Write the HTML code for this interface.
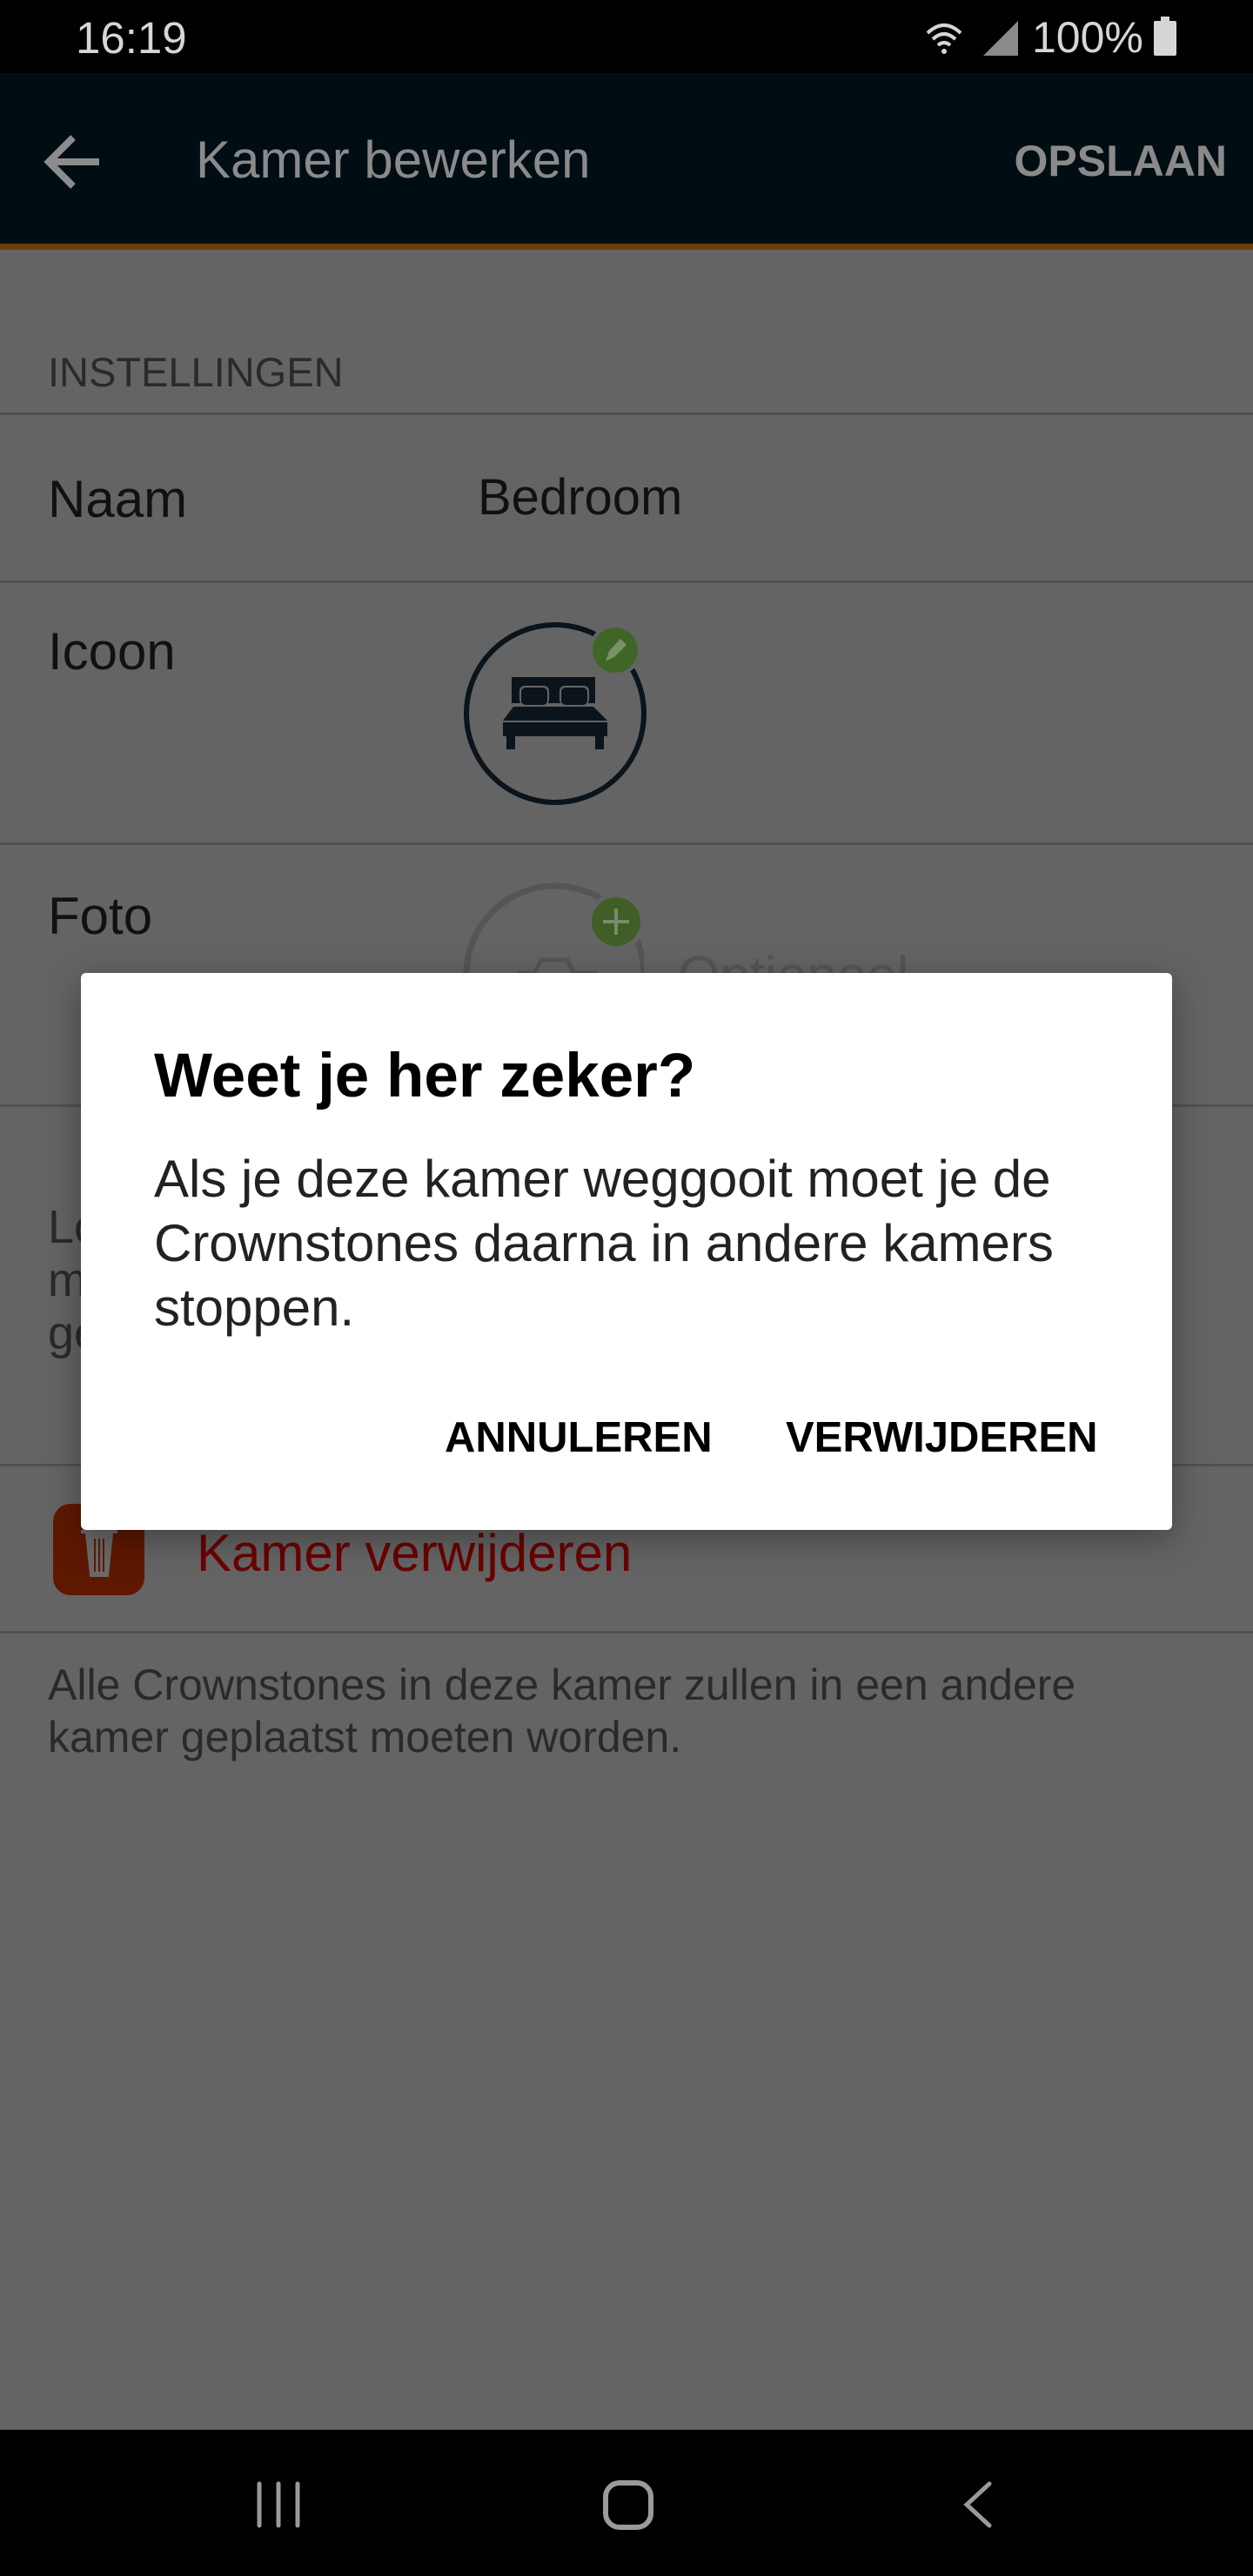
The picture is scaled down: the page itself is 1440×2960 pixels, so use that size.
<!DOCTYPE html>
<html><head><meta charset="utf-8"><style>
*{margin:0;padding:0;box-sizing:border-box}
body{width:1440px;height:2960px;position:relative;background:#646464;font-family:"Liberation Sans",sans-serif;overflow:hidden}
.abs{position:absolute;white-space:nowrap}
.line{position:absolute;left:0;width:1440px;height:3px;background:#505050}
</style></head><body>
<div class="abs" style="left:0;top:0;width:1440px;height:84px;background:#000"></div>
<div class="abs" style="left:87px;top:14px;font-size:51px;color:#d6d6d6">16:19</div>
<svg class="abs" style="left:1060px;top:18px" width="300" height="50" viewBox="0 0 300 50">
<path d="M6 20 Q25 2 44 20" stroke="#d6d6d6" stroke-width="4" fill="none"/>
<path d="M12 27 Q25 15 38 27" stroke="#d6d6d6" stroke-width="4" fill="none"/>
<path d="M18 34 Q25 28 32 34" stroke="#d6d6d6" stroke-width="4" fill="none"/>
<circle cx="25" cy="41" r="3" fill="#d6d6d6"/>
<path d="M70 46 L110 46 L110 6 Z" fill="#8a8a8a"/>
</svg>
<div class="abs" style="left:1186px;top:14px;font-size:50px;color:#d6d6d6">100%</div>
<div class="abs" style="left:1326px;top:24px;width:26px;height:40px;background:#d6d6d6;border-radius:2px"></div>
<div class="abs" style="left:1334px;top:19px;width:10px;height:6px;background:#d6d6d6"></div>

<div class="abs" style="left:0;top:84px;width:1440px;height:197px;background:#000d13"></div>
<div class="abs" style="left:0;top:280px;width:1440px;height:7px;background:#6a3e0a"></div>
<svg class="abs" style="left:48px;top:150px" width="72" height="72" viewBox="0 0 72 72"><path d="M66 36 H10 M36 8 L8 36 L36 64" stroke="#8c8c8c" stroke-width="8" fill="none"/></svg>
<div class="abs" style="left:225px;top:149px;font-size:60px;color:#8a8a8a">Kamer bewerken</div>
<div class="abs" style="right:30px;top:156px;font-size:50px;font-weight:bold;color:#8a8a8a">OPSLAAN</div>

<div class="abs" style="left:55px;top:400px;font-size:47px;color:#2a2a2a">INSTELLINGEN</div>
<div class="line" style="top:474px"></div>
<div class="abs" style="left:55px;top:539px;font-size:60px;color:#111">Naam</div>
<div class="abs" style="left:549px;top:538px;font-size:58px;color:#111">Bedroom</div>
<div class="line" style="top:667px"></div>
<div class="abs" style="left:55px;top:714px;font-size:60px;color:#111">Icoon</div>
<svg class="abs" style="left:530px;top:710px" width="220" height="220" viewBox="530 710 220 220">
<circle cx="638" cy="820" r="102" stroke="#0a141a" stroke-width="6" fill="none"/>
<circle cx="707" cy="747" r="30" fill="#646464"/>
<circle cx="707" cy="747" r="26" fill="#3f6626"/>
<path d="M696 760 L700 748 L713 734 L720 741 L706 755 Z" fill="#7a8f6a"/>
<rect x="588" y="778" width="96" height="30" fill="#0a141a"/>
<rect x="597" y="788" width="34" height="22" rx="6" fill="#646464"/>
<rect x="643" y="788" width="34" height="22" rx="6" fill="#646464"/>
<rect x="599" y="790" width="30" height="20" rx="5" fill="#0a141a"/>
<rect x="645" y="790" width="30" height="20" rx="5" fill="#0a141a"/>
<path d="M590 812 L682 812 L698 828 L578 828 Z" fill="#0a141a"/>
<rect x="578" y="830" width="120" height="16" fill="#0a141a"/>
<rect x="582" y="846" width="10" height="15" fill="#0a141a"/>
<rect x="684" y="846" width="10" height="15" fill="#0a141a"/>
</svg>
<div class="line" style="top:968px"></div>
<div class="abs" style="left:55px;top:1018px;font-size:60px;color:#111">Foto</div>
<svg class="abs" style="left:520px;top:1000px" width="220" height="200" viewBox="520 1000 220 200">
<circle cx="638" cy="1120" r="102" stroke="#555" stroke-width="7" fill="none"/>
<circle cx="708" cy="1059" r="33" fill="#646464"/>
<circle cx="708" cy="1059" r="28" fill="#405f26"/>
<path d="M708 1044 V1074 M693 1059 H723" stroke="#7a8a6a" stroke-width="4"/>
<path d="M598 1118 V1132 H684 V1118 H660 L652 1103 H622 L614 1118 Z" stroke="#555" stroke-width="5" fill="none"/>
</svg>
<div class="abs" style="left:779px;top:1086px;font-size:62px;color:#555">Optioneel</div>
<div class="line" style="top:1269px"></div>
<div class="abs" style="left:55px;top:1380px;font-size:54px;color:#2a2a2a;line-height:61px">Lo<br>m<br>ge</div>
<div class="line" style="top:1682px"></div>
<div class="abs" style="left:61px;top:1728px;width:105px;height:105px;border-radius:20px;background:#5e1800"></div>
<svg class="abs" style="left:90px;top:1750px" width="50" height="64" viewBox="0 0 50 64">
<path d="M3 10 H45 M10 12 L15 60 H33 L38 12 Z" stroke="#6a6a6a" stroke-width="4" fill="#6a6a6a"/>
<path d="M19 18 V56 M24 18 V56 M29 18 V56" stroke="#5e1800" stroke-width="2"/>
</svg>
<div class="abs" style="left:226px;top:1750px;font-size:60px;color:#6b0000">Kamer verwijderen</div>
<div class="line" style="top:1874px"></div>
<div class="abs" style="left:55px;top:1906px;font-size:50px;color:#2a2a2a;line-height:60px">Alle Crownstones in deze kamer zullen in een andere<br>kamer geplaatst moeten worden.</div>

<div class="abs" style="left:93px;top:1118px;width:1254px;height:640px;background:#fff;border-radius:6px;box-shadow:0 10px 40px rgba(0,0,0,0.35)"></div>
<div class="abs" style="left:177px;top:1196px;font-size:71px;font-weight:bold;color:#000">Weet je her zeker?</div>
<div class="abs" style="left:177px;top:1318px;font-size:60px;color:#222;line-height:74px">Als je deze kamer weggooit moet je de<br>Crownstones daarna in andere kamers<br>stoppen.</div>
<div class="abs" style="left:511px;top:1624px;font-size:49px;font-weight:bold;color:#000">ANNULEREN</div>
<div class="abs" style="left:903px;top:1624px;font-size:49px;font-weight:bold;color:#000">VERWIJDEREN</div>

<div class="abs" style="left:0;top:2792px;width:1440px;height:168px;background:#000"></div>
<svg class="abs" style="left:280px;top:2840px" width="900" height="80" viewBox="280 2840 900 80">
<path d="M298 2854 V2902 M320 2854 V2902 M342 2854 V2902" stroke="#9a9a9a" stroke-width="5" stroke-linecap="round"/>
<rect x="696" y="2853" width="52" height="51" rx="16" stroke="#9a9a9a" stroke-width="6" fill="none"/>
<path d="M1137 2854 L1111 2878 L1137 2902" stroke="#9a9a9a" stroke-width="5" fill="none" stroke-linecap="round"/>
</svg>
</body></html>
